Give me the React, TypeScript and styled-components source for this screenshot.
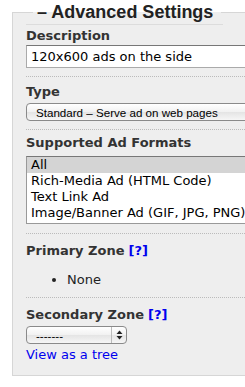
import styled, { createGlobalStyle } from "styled-components";

const GlobalStyle = createGlobalStyle`
  html, body {
    margin: 0;
    padding: 0;
    background: #fff;
    overflow: hidden;
    font-family: "DejaVu Sans", Verdana, sans-serif;
    color: #222;
  }
`;

const Panel = styled.fieldset`
  box-sizing: border-box;
  width: 270px;
  margin: 0 0 0 12px;
  padding: 0 0 0 13px;
  border: 1px solid #d6d6d6;
  background: #eee;
`;

const Legend = styled.legend`
  margin-left: 7px;
  padding: 0 8px 0 4px;
  font-family: "Liberation Sans", Arial, sans-serif;
  font-size: 18px;
  line-height: 24px;
  font-weight: bold;
  color: #222;
`;

const TitleRule = styled.div`
  width: 197px;
  border-top: 1px solid #dcdcdc;
`;

const Section = styled.div<{ $top: number; $bottom: number; $last?: boolean }>`
  width: 245px;
  padding-top: ${(p) => p.$top}px;
  padding-bottom: ${(p) => p.$bottom}px;
  border-bottom: ${(p) => (p.$last ? "none" : "1px dotted #bbb")};
`;

const Label = styled.div`
  font-size: 13px;
  line-height: 16px;
  font-weight: bold;
  color: #333;
`;

const Help = styled.a`
  color: #00e;
  text-decoration: none;
  margin-left: 4px;
`;

const TextInput = styled.input`
  box-sizing: border-box;
  display: block;
  width: 240px;
  height: 23px;
  margin-top: 1px;
  padding: 0 4px;
  border: 1px solid #aaa;
  border-top-color: #777;
  background: #fff;
  font-family: "DejaVu Sans", Verdana, sans-serif;
  font-size: 13px;
  color: #000;
  outline: none;
`;

const Dropdown = styled.div<{ $width: number }>`
  box-sizing: border-box;
  display: flex;
  align-items: center;
  width: ${(p) => p.$width}px;
  height: 18px;
  margin-top: 3px;
  border: 1px solid #8a8a8a;
  border-radius: 4px;
  background: linear-gradient(#fff, #f1f1f1 50%, #e4e4e4 51%, #f6f6f6);
  font-family: "Liberation Sans", Arial, sans-serif;
  font-size: 11.6px;
  color: #000;
  overflow: hidden;
  white-space: nowrap;
`;

const DropText = styled.span`
  flex: 1;
  padding-left: 9px;
`;

const Stepper = styled.span`
  display: flex;
  align-items: center;
  justify-content: center;
  width: 14px;
  height: 100%;
  border-left: 1px solid #bbb;
`;

const ListBox = styled.div`
  box-sizing: border-box;
  width: 240px;
  margin-top: 5px;
  padding-bottom: 2px;
  border: 1px solid #999;
  border-top-color: #777;
  background: #fff;
  font-size: 13px;
  line-height: 16px;
  color: #000;
  white-space: nowrap;
  overflow: hidden;
`;

const Option = styled.div<{ $selected?: boolean }>`
  padding-left: 4px;
  background: ${(p) => (p.$selected ? "#d4d4d4" : "transparent")};
`;

const Bullets = styled.ul`
  margin: 13px 0 0;
  padding-left: 41px;
  font-size: 13px;
  line-height: 16px;
  color: #222;
`;

const TreeLink = styled.a`
  display: block;
  margin-top: 3px;
  font-size: 13px;
  line-height: 16px;
  color: #00e;
  text-decoration: none;
`;

export default function App() {
  return (
    <>
      <GlobalStyle />
      <Panel>
        <Legend>– Advanced Settings</Legend>
        <TitleRule />
        <Section $top={3} $bottom={8}>
          <Label>Description</Label>
          <TextInput readOnly value="120x600 ads on the side" />
        </Section>
        <Section $top={7} $bottom={8}>
          <Label>Type</Label>
          <Dropdown $width={240}>
            <DropText>Standard – Serve ad on web pages</DropText>
          </Dropdown>
        </Section>
        <Section $top={5} $bottom={9}>
          <Label>Supported Ad Formats</Label>
          <ListBox>
            <Option $selected>All</Option>
            <Option>Rich-Media Ad (HTML Code)</Option>
            <Option>Text Link Ad</Option>
            <Option>Image/Banner Ad (GIF, JPG, PNG)</Option>
          </ListBox>
        </Section>
        <Section $top={9} $bottom={9}>
          <Label>
            Primary Zone<Help href="#">[?]</Help>
          </Label>
          <Bullets>
            <li>None</li>
          </Bullets>
        </Section>
        <Section $top={9} $bottom={12} $last>
          <Label>
            Secondary Zone<Help href="#">[?]</Help>
          </Label>
          <Dropdown $width={101}>
            <DropText>-------</DropText>
            <Stepper>
              <svg width="7" height="10" viewBox="0 0 7 10">
                <path d="M3.5 0.5L6.5 4H0.5Z" fill="#222" />
                <path d="M3.5 9.5L6.5 6H0.5Z" fill="#222" />
              </svg>
            </Stepper>
          </Dropdown>
          <TreeLink href="#">View as a tree</TreeLink>
        </Section>
      </Panel>
    </>
  );
}
